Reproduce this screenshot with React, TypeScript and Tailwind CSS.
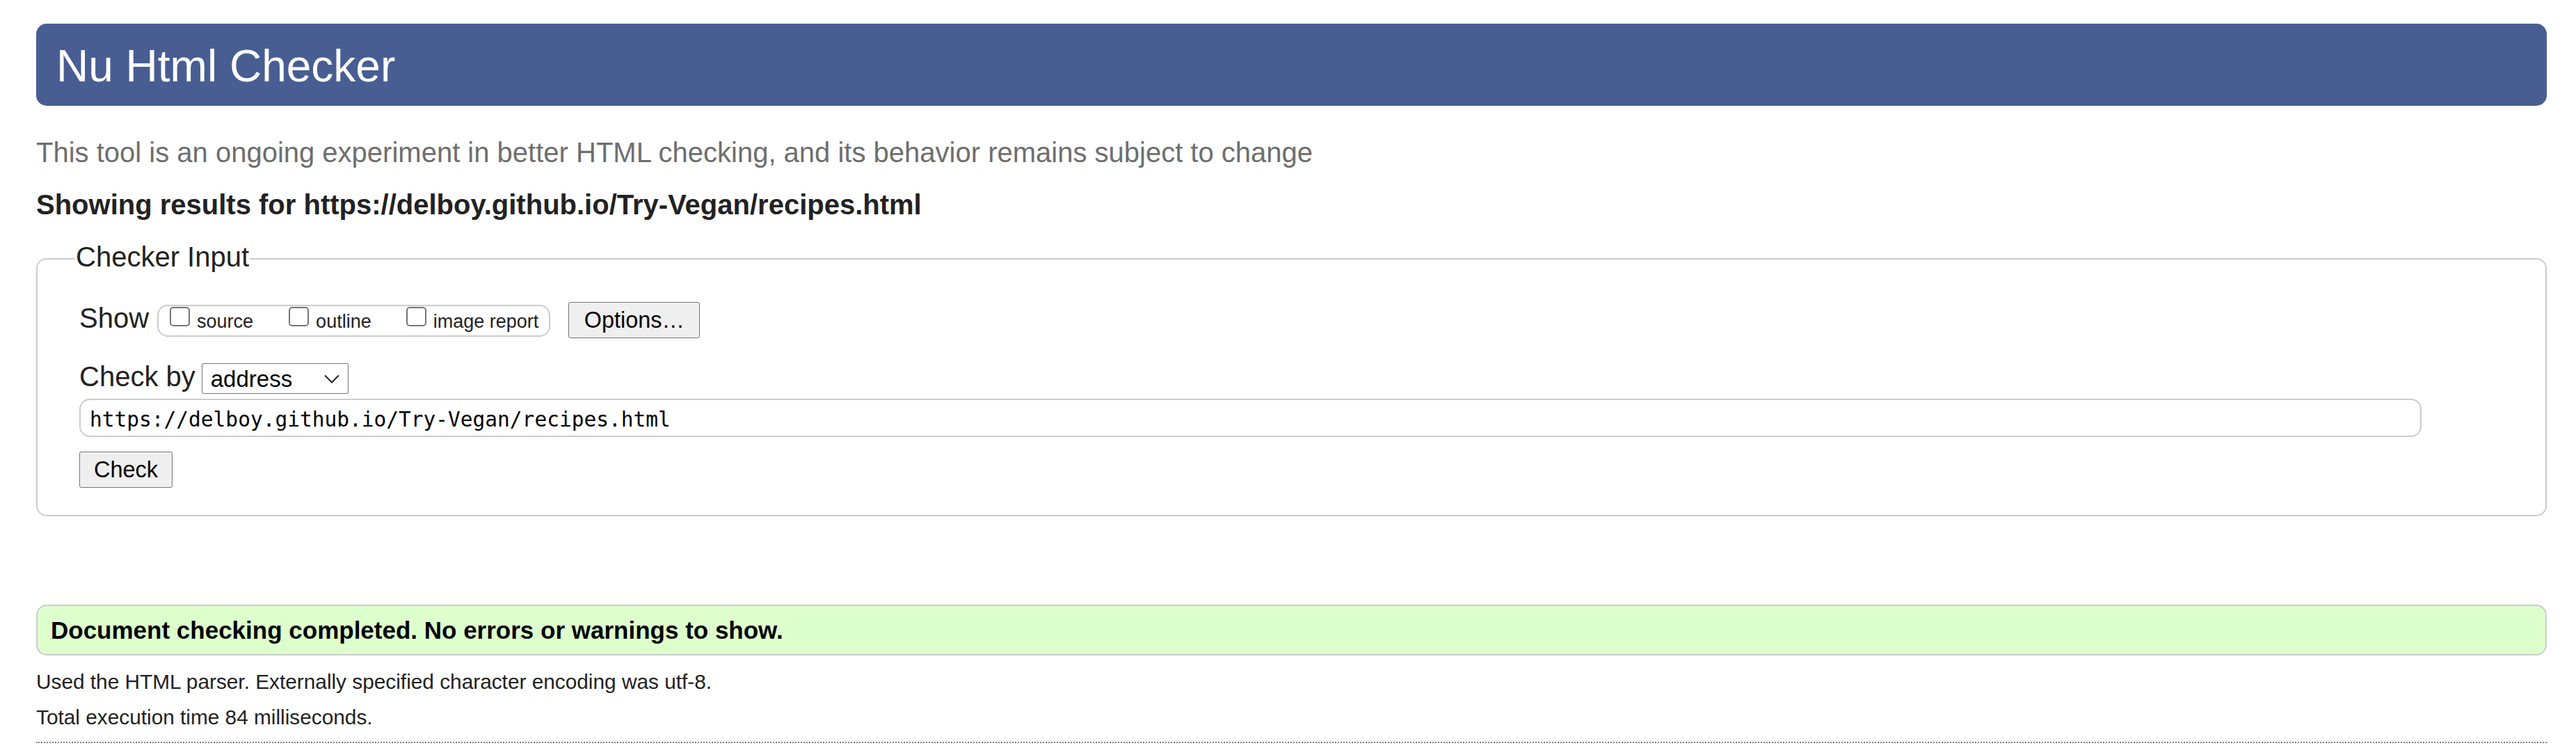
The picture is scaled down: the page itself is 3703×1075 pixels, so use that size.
import React from 'react';

const Checkbox: React.FC<{ label: string; className?: string }> = ({ label, className = '' }) => (
  <label className={`flex items-start gap-[10px] ${className}`}>
    <span className="mt-[1px] w-[29px] h-[28px] rounded-[5px] border-2 border-[#767676] bg-white" />
    <span className="mt-[8px] text-[27px] leading-[28px] text-[#222]">{label}</span>
  </label>
);

export default function App() {
  return (
    <div className="min-h-[1075px] bg-white pl-[52px] pr-[42px] pt-[34px] font-['Liberation_Sans','Arial',sans-serif] text-[#222]">
      <div className="h-[118px] rounded-[15px] bg-[#485e93] pl-[29px] pt-[29px]">
        <h1 className="text-[64px] leading-[64px] text-white">Nu Html Checker</h1>
      </div>

      <p className="mt-[47px] text-[40px] leading-[40px] text-[#6e6e6e]">
        This tool is an ongoing experiment in better HTML checking, and its behavior remains subject to change
      </p>

      <p className="mt-[35px] text-[40px] leading-[40px] font-bold text-[#222]">
        Showing results for https://delboy.github.io/Try-Vegan/recipes.html
      </p>

      <fieldset className="mt-[35px] rounded-[15px] border-2 border-[#ccc] pl-[60px] pr-[60px] pb-[39px]">
        <legend className="-ml-[6px] px-[1px] pb-[6px] text-[40px] leading-[40px] text-[#222]">Checker Input</legend>

        <div className="mt-[39px] flex items-start h-[52px]">
          <span className="mt-[3px] text-[40px] leading-[40px]">Show</span>
          <div className="ml-[12px] mt-[4px] flex items-start h-[46px] rounded-[15px] border-2 border-[#ccc] pl-[16px] pr-[15px]">
            <Checkbox label="source" />
            <Checkbox label="outline" className="ml-[51px]" />
            <Checkbox label="image report" className="ml-[50px]" />
          </div>
          <button className="ml-[26px] h-[52px] w-[189px] rounded-[3px] border border-[#767676] bg-[#efefef] text-[32.4px] text-black">
            Options…
          </button>
        </div>

        <div className="mt-[35px] flex items-start h-[45px]">
          <span className="text-[40px] leading-[40px]">Check by</span>
          <div className="ml-[9px] mt-[1px] flex items-center justify-between h-[44px] w-[211px] rounded-[2px] border border-[#767676] bg-white pl-[12px] pr-[12px]">
            <span className="text-[33px] leading-[33px] text-black">address</span>
            <svg width="22" height="13" viewBox="0 0 22 13" fill="none">
              <path d="M1 1.5 L11 11.5 L21 1.5" stroke="#222" strokeWidth="2" />
            </svg>
          </div>
        </div>

        <div className="mt-[7px] flex items-center h-[55px] rounded-[15px] border-2 border-[#ccc] pl-[13px] pt-[4px] w-[3367px]">
          <span className="font-['DejaVu_Sans_Mono',monospace] text-[29.5px] leading-[30px] text-black">
            https://delboy.github.io/Try-Vegan/recipes.html
          </span>
        </div>

        <button className="mt-[21px] h-[52px] w-[134px] rounded-[3px] border border-[#767676] bg-[#efefef] text-[32.5px] text-black">
          Check
        </button>
      </fieldset>

      <div className="mt-[127px] h-[73px] rounded-[15px] border-2 border-[#ccc] bg-[#ddffcc] pl-[19px] pt-[17px]">
        <p className="text-[35px] leading-[35px] font-bold text-black">
          Document checking completed. No errors or warnings to show.
        </p>
      </div>

      <p className="mt-[23px] text-[29.8px] leading-[30px] text-[#222]">
        Used the HTML parser. Externally specified character encoding was utf-8.
      </p>
      <p className="mt-[21px] text-[29.8px] leading-[30px] text-[#222]">Total execution time 84 milliseconds.</p>

      <hr className="mt-[20px] border-0 border-t-2 border-dotted border-[#808080]" />
    </div>
  );
}
